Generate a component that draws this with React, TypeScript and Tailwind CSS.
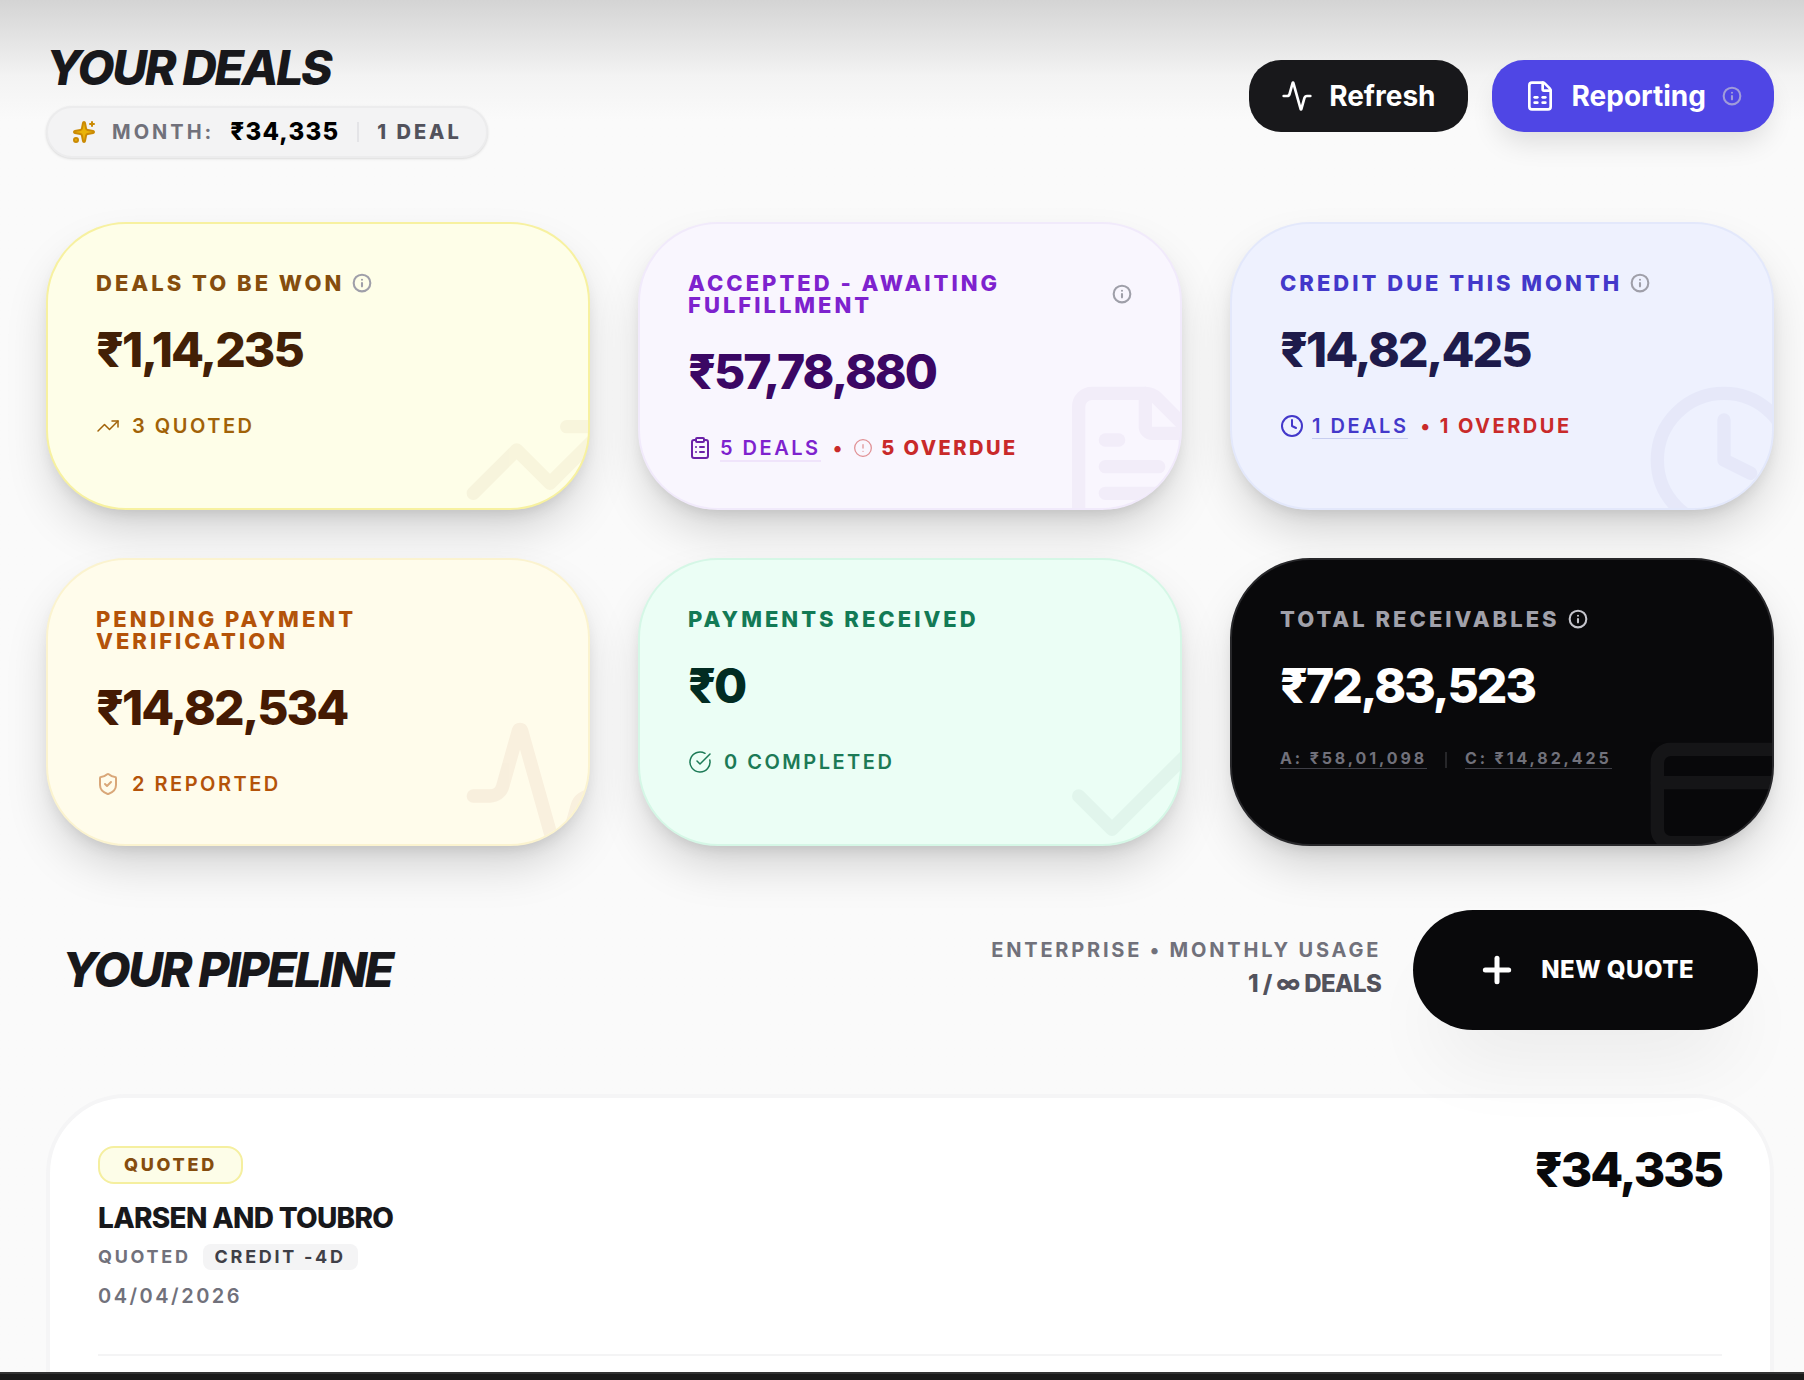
import {
  Activity,
  Check,
  CircleAlert,
  CircleCheckBig,
  ClipboardList,
  Clock,
  CreditCard,
  FileSpreadsheet,
  FileText,
  Info,
  Plus,
  ShieldCheck,
  Sparkles,
  TrendingUp,
  type LucideIcon,
} from "lucide-react";
import type { ReactNode } from "react";

type StatCardProps = {
  label: string;
  amount: string;
  watermark: LucideIcon;
  watermarkColor: string;
  card: string;
  labelColor: string;
  amountColor: string;
  info?: string;
  children: ReactNode;
};

function StatCard({
  label,
  amount,
  watermark: Watermark,
  watermarkColor,
  card,
  labelColor,
  amountColor,
  info,
  children,
}: StatCardProps) {
  return (
    <section
      className={`relative overflow-hidden rounded-[80px] border-2 p-12 shadow-[0_24px_48px_-8px_rgba(0,0,0,0.18),0_8px_16px_-6px_rgba(0,0,0,0.12)] ${card}`}
    >
      <Watermark className={`absolute -right-8 -bottom-8 size-40 ${watermarkColor}`} />
      <div className="flex items-center gap-2">
        <h2 className={`text-[22px] leading-[22px] font-extrabold tracking-[3px] uppercase ${labelColor}`}>{label}</h2>
        {info && <Info className={`size-5 shrink-0 ${info}`} strokeWidth={2.5} />}
      </div>
      <p className={`mt-8 text-5xl leading-none font-extrabold tracking-[-2px] ${amountColor}`}>{amount}</p>
      {children}
    </section>
  );
}

export default function App() {
  return (
    <div className="flex h-screen flex-col overflow-hidden bg-[#fafafa] font-[Inter,sans-serif]">
      <main className="min-h-0 flex-1 overflow-hidden bg-linear-to-b from-[#d4d4d4] via-[#f3f3f3] via-[76px] to-[#fafafa] to-[120px] pt-[34px] pr-[30px] pl-[46px]">
        {/* Header */}
        <header className="flex items-center justify-between">
          <div>
            <h1 className="text-5xl leading-[68px] font-extrabold tracking-tighter text-zinc-900 uppercase italic">Your Deals</h1>
            <div className="mt-1 flex h-[52px] items-center gap-4 rounded-full border-2 border-[#ececed] bg-[#f3f3f4] px-6 shadow-sm">
              <Sparkles className="size-6 fill-[#eab308] text-[#ca8a04]" />
              <span className="text-xl font-bold tracking-[0.15em] text-zinc-500 uppercase">Month:</span>
              <span className="text-2xl font-extrabold tracking-wider text-black">₹34,335</span>
              <span className="mx-0.5 h-5 w-0.5 bg-zinc-200" />
              <span className="text-xl font-extrabold tracking-[0.15em] text-zinc-600 uppercase">1 Deal</span>
            </div>
          </div>
          <div className="flex items-center gap-6">
            <button className="flex h-[72px] items-center gap-4 rounded-[32px] bg-zinc-900 px-8 text-[28px] font-bold text-white">
              <Activity className="size-8" />
              Refresh
            </button>
            <button className="flex h-[72px] items-center gap-4 rounded-[32px] bg-[#4f46e5] px-8 text-[28px] font-bold text-white shadow-[0_16px_28px_-6px_rgba(0,0,0,0.12)]">
              <FileSpreadsheet className="size-8" />
              Reporting
              <Info className="size-5 text-[#a09cda]" strokeWidth={2.5} />
            </button>
          </div>
        </header>

        {/* Stats */}
        <div className="mt-16 grid grid-cols-3 gap-12">
          <StatCard
            label="Deals to be won"
            amount="₹1,14,235"
            watermark={TrendingUp}
            watermarkColor="text-[#854d0e] opacity-5"
            card="border-[#f7f1a0] bg-[#fefee8]"
            labelColor="text-[#854d0e]"
            amountColor="text-[#422006]"
            info="text-zinc-400"
          >
            <p className="mt-10 flex items-center gap-3 text-xl leading-6 font-semibold tracking-[0.125em] text-[#a16207] uppercase">
              <TrendingUp className="size-6" strokeWidth={1.5} />3 Quoted
            </p>
          </StatCard>

          <StatCard
            label="Accepted - Awaiting Fulfillment"
            amount="₹57,78,880"
            watermark={FileText}
            watermarkColor="text-[#581c87] opacity-[0.04]"
            card="border-[#f1eafb] bg-[#f9f6fe]"
            labelColor="text-[#7e22ce]"
            amountColor="text-[#3b0764]"
            info="text-zinc-400"
          >
            <div className="mt-10 flex items-center gap-2 text-xl leading-6 font-semibold tracking-[0.125em] text-[#7e22ce] uppercase">
              <ClipboardList className="size-6 text-[#6b21a8]" />
              <a href="#accepted" className="-mb-0.5 border-b-2 border-[#f0e4fb]">5 Deals</a>
              <span className="pl-1 text-[#c92a2a]">•</span>
              <CircleAlert className="size-5 text-[#c92a2a] opacity-50" strokeWidth={1.5} />
              <span className="font-extrabold text-[#c92a2a]">5 Overdue</span>
            </div>
          </StatCard>

          <StatCard
            label="Credit due this month"
            amount="₹14,82,425"
            watermark={Clock}
            watermarkColor="text-[#312e81] opacity-[0.04]"
            card="border-[#e3e8fb] bg-[#eef1fe]"
            labelColor="text-[#4338ca]"
            amountColor="text-[#1e1b4b]"
            info="text-zinc-400"
          >
            <div className="mt-10 flex items-center gap-2 text-xl leading-6 font-semibold tracking-[0.125em] text-[#4338ca] uppercase">
              <Clock className="size-6" />
              <a href="#credit" className="-mb-px border-b border-[#c7cdf0]">1 Deals</a>
              <span className="pl-1 font-bold text-[#c92a2a]">• 1 Overdue</span>
            </div>
          </StatCard>

          <StatCard
            label="Pending Payment Verification"
            amount="₹14,82,534"
            watermark={Activity}
            watermarkColor="text-[#9a3412] opacity-[0.06]"
            card="border-[#fbf3cf] bg-[#fffceb]"
            labelColor="text-[#b45309]"
            amountColor="text-[#451a03]"
          >
            <p className="mt-10 flex items-center gap-3 text-xl leading-6 font-semibold tracking-[0.125em] text-[#b45309] uppercase">
              <ShieldCheck className="size-6 opacity-50" />2 Reported
            </p>
          </StatCard>

          <StatCard
            label="Payments Received"
            amount="₹0"
            watermark={Check}
            watermarkColor="text-[#022c22] opacity-[0.04]"
            card="border-[#d5f7e6] bg-[#ebfef5]"
            labelColor="text-[#137a55]"
            amountColor="text-[#022c22]"
          >
            <p className="mt-10 flex items-center gap-3 text-xl leading-6 font-semibold tracking-[0.125em] text-[#1c7a56] uppercase">
              <CircleCheckBig className="size-6" strokeWidth={1.5} />0 Completed
            </p>
          </StatCard>

          <StatCard
            label="Total Receivables"
            amount="₹72,83,523"
            watermark={CreditCard}
            watermarkColor="text-white opacity-5"
            card="border-zinc-800 bg-zinc-950"
            labelColor="text-[#a1a1aa]"
            amountColor="text-white"
            info="text-[#c4c4cb]"
          >
            <div className="mt-10 flex items-center gap-4 text-base leading-4 font-bold tracking-[0.18em] text-zinc-500">
              <a href="#accepted" className="border-b border-zinc-700 pb-0.5">A: ₹58,01,098</a>
              <span className="mx-0.5 h-4 w-0.5 bg-zinc-800" />
              <a href="#credit" className="border-b border-zinc-700 pb-0.5">C: ₹14,82,425</a>
            </div>
          </StatCard>
        </div>

        {/* Pipeline */}
        <div className="mt-16 flex items-center justify-between px-4">
          <h2 className="text-5xl leading-none font-extrabold tracking-tighter text-zinc-900 uppercase italic">Your Pipeline</h2>
          <div className="flex items-center gap-8">
            <div className="pb-1 text-right">
              <p className="text-xl leading-8 font-bold tracking-[0.14em] text-zinc-500 uppercase">Enterprise • Monthly Usage</p>
              <p className="text-2xl leading-9 font-extrabold tracking-tight text-zinc-600 uppercase">1 / ∞ Deals</p>
            </div>
            <button className="flex h-[120px] items-center gap-6 rounded-[60px] bg-zinc-950 px-16 text-2xl font-extrabold tracking-[0.02em] text-white uppercase shadow-[0_50px_80px_-24px_rgba(0,0,0,0.07)]">
              <Plus className="size-10" strokeWidth={3} />
              New Quote
            </button>
          </div>
        </div>

        <article className="mt-16 rounded-[80px] border-4 border-[#f5f5f6] bg-white p-12 pb-32">
          <div className="flex items-start justify-between">
            <div className="flex flex-col items-start">
              <span className="rounded-2xl border-2 border-[#f5ef9f] bg-[#fdfde8] px-6 py-1 text-lg leading-[26px] font-extrabold tracking-[0.15em] text-[#854d0e] uppercase">
                Quoted
              </span>
              <h3 className="mt-4 text-[28px] leading-9 font-extrabold tracking-tight text-zinc-900 uppercase">Larsen and Toubro</h3>
              <div className="mt-2 flex items-center gap-3 text-lg leading-[26px] font-bold tracking-[0.15em] uppercase">
                <span className="text-zinc-500">Quoted</span>
                <span className="rounded-lg bg-zinc-100 px-3 text-zinc-700">Credit -4d</span>
              </div>
              <time className="mt-3 text-xl leading-7 font-semibold tracking-[0.125em] text-zinc-500">04/04/2026</time>
            </div>
            <p className="text-5xl leading-none font-extrabold tracking-[-2px] text-zinc-950">₹34,335</p>
          </div>
          <hr className="mt-11 h-0.5 border-0 bg-zinc-100" />
        </article>
      </main>
      <footer className="h-2 shrink-0 border-t-2 border-[#333333] bg-[#1a1a1a]" />
    </div>
  );
}
